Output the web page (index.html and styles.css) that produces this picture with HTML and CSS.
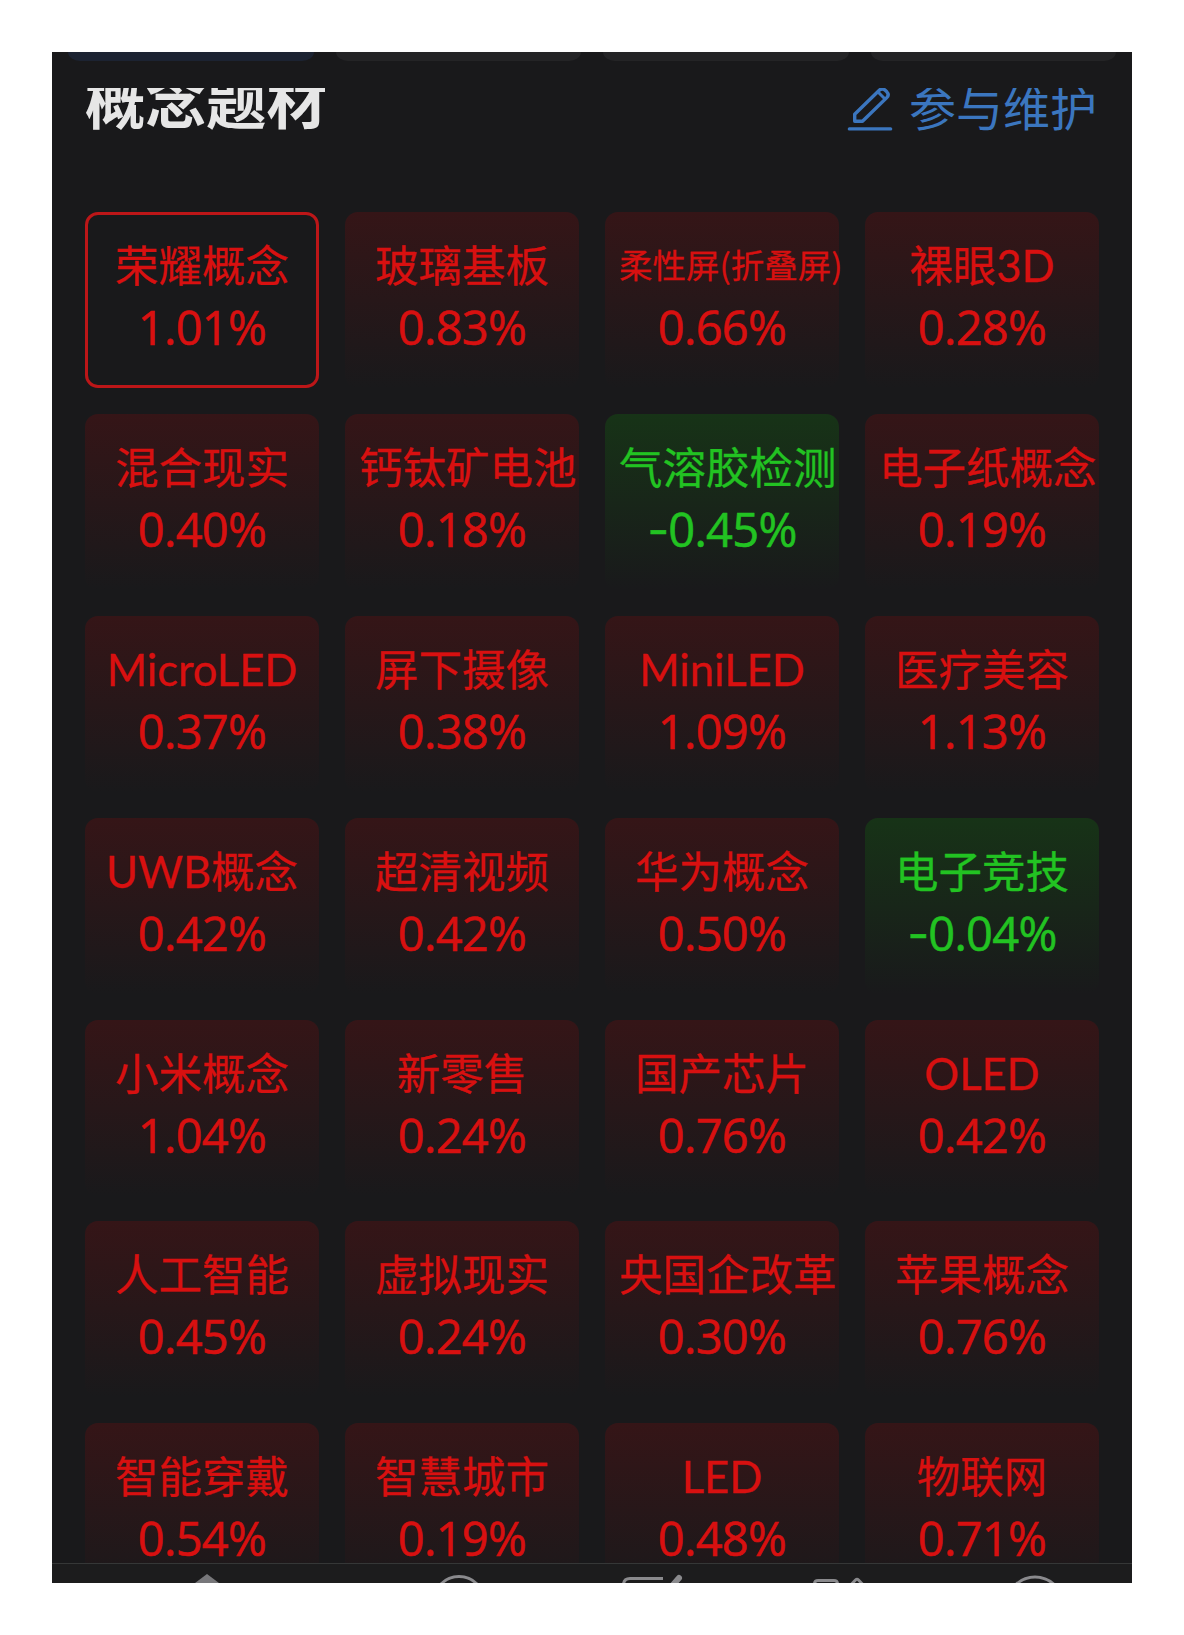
FILE: index.html
```html
<!DOCTYPE html>
<html lang="zh-CN">
<head>
    <meta charset="UTF-8">
    <meta name="viewport" content="width=device-width, initial-scale=1.0">
    <title>概念题材</title>
    <link rel="stylesheet" href="styles.css">
</head>
<body>
    <div id="app">
        <ul class="tabs">
            <li class="on"></li>
            <li></li>
            <li></li>
            <li></li>
        </ul>
        <div id="content">
            <div class="head">
                <h2>概念题材</h2>
                <a class="edit">
                    <svg width="46" height="44" viewBox="0 0 46 44" fill="none" stroke="#3b76bf" stroke-width="3.4">
                        <path d="M7.7 33.3V26.2L32.3 2.2Q35.2 -.5 38.2 2.2L39.8 3.8Q42.6 6.8 39.8 9.600L15.5 33.3Z" stroke-linejoin="round"/>
                        <path d="M31 4L38 11" stroke-width="3"/>
                        <path d="M2.4 40.9H43.6" stroke-linecap="round"/>
                    </svg>
                    <span>参与维护</span>
                </a>
            </div>
            <ul class="list" id="list"></ul>
        </div>
        <ul class="nav">
            <li><svg width="64" height="19" viewBox="0 0 64 19"><path d="M32 10L20 19H44Z" fill="#77777a"/></svg></li>
            <li><svg width="64" height="19" viewBox="0 0 64 19"><circle cx="32" cy="38" r="25.5"/></svg></li>
            <li><svg width="64" height="19" viewBox="0 0 64 19"><path d="M3.5 21Q3.5 14.5 10 14.5H43"/><path d="M52 22L59 14" stroke-width="6" stroke-linecap="round"/></svg></li>
            <li><svg width="64" height="19" viewBox="0 0 64 19"><path d="M3.5 24V20Q3.5 16.5 7 16.5H23Q26.5 16.5 26.5 20V24"/><path d="M36 25L44.5 16Q46 14.5 47.500 16L56 25"/></svg></li>
            <li><svg width="64" height="19" viewBox="0 0 64 19"><circle cx="32" cy="41" r="28"/></svg></li>
        </ul>
    </div>

    <script>
        var data = [
            ['荣耀概念', 1.01], ['玻璃基板', 0.83], ['柔性屏(折叠屏)', 0.66], ['裸眼3D', 0.28],
            ['混合现实', 0.40], ['钙钛矿电池', 0.18], ['气溶胶检测', -0.45], ['电子纸概念', 0.19],
            ['MicroLED', 0.37], ['屏下摄像', 0.38], ['MiniLED', 1.09], ['医疗美容', 1.13],
            ['UWB概念', 0.42], ['超清视频', 0.42], ['华为概念', 0.50], ['电子竞技', -0.04],
            ['小米概念', 1.04], ['新零售', 0.24], ['国产芯片', 0.76], ['OLED', 0.42],
            ['人工智能', 0.45], ['虚拟现实', 0.24], ['央国企改革', 0.30], ['苹果概念', 0.76],
            ['智能穿戴', 0.54], ['智慧城市', 0.19], ['LED', 0.48], ['物联网', 0.71]
        ];
        var html = '';
        for (var i = 0; i < data.length; i++) {
            var cls = data[i][1] < 0 ? 'down' : 'up';
            if (i == 0) { cls += ' active'; }
            // 带括号的名字太长，用小字号
            var small = data[i][0].indexOf('(') > -1 ? ' small' : '';
            html += '<li class="' + cls + '"><p class="name' + small + '">' + data[i][0] + '</p>'
                + '<p class="rate">' + data[i][1].toFixed(2).replace('-', '<i>-</i>') + '%</p></li>';
        }
        document.getElementById('list').innerHTML = html;
    </script>
</body>
</html>
```
FILE: styles.css
```css
* {
    margin: 0;
    padding: 0;
    box-sizing: border-box;
}
body {
    background: #fff;
    font-family: "Noto Sans CJK SC", sans-serif;
}
li {
    list-style: none;
}
#app {
    display: flex;
    flex-direction: column;
    width: 1080px;
    height: 1531px;
    margin: 52px;
    background: #19191b;
    overflow: hidden;
}
.tabs {
    display: flex;
    gap: 22px;
    height: 36px;
    padding: 0 16px;
}
.tabs li {
    flex: 1;
    height: 9px;
    border-radius: 0 0 12px 12px / 0 0 9px 9px;
    background: #242426;
}
.tabs li.on {
    background: #1c2332;
}
#content {
    height: 1475px;
    overflow: hidden;
}
.head {
    display: flex;
    justify-content: space-between;
    height: 124px;
    padding: 0 35px 0 33px;
}
.head h2 {
    margin-top: -26px;
    line-height: 72px;
    font-size: 60.500px;
    font-weight: 700;
    color: #e6e6e6;
}
.head .edit {
    display: flex;
    gap: 16px;
    color: #3b76bf;
    font-size: 47px;
}
.head .edit span {
    margin-top: -16px;
    line-height: 68px;
}
.list {
    display: grid;
    grid-template-columns: repeat(4, 234px);
    gap: 25.9px 26px;
    padding: 0 33px;
}
.list li {
    height: 176px;
    padding: 30px 14px 0;
    border-radius: 13px;
    text-align: center;
    white-space: nowrap;
}
.list .up {
    color: #d81010;
    background: linear-gradient(#351517, #19191b);
}
.list .down {
    color: #22c322;
    background: linear-gradient(#173317, #19191b);
}
.list .active {
    padding: 27px 11px 0;
    border: 3px solid #bc1618;
    background: none;
}
.list .name {
    height: 46px;
    line-height: 46px;
    font-family: Lato, "Noto Sans CJK SC", sans-serif;
    font-size: 43.500px;
    -webkit-text-stroke: .3px currentColor;
}
.list .small {
    line-height: 44px;
    font-family: "Noto Sans CJK SC", sans-serif;
    font-size: 33.500px;
}
.list .rate {
    margin-top: 9px;
    line-height: 60px;
    font-family: "Open Sans", sans-serif;
    font-size: 47px;
    letter-spacing: -.7px;
    -webkit-text-stroke: .6px currentColor;
}
.list .rate i {
    font-style: normal;
    font-family: Inter, sans-serif;
}
.nav {
    display: grid;
    grid-template-columns: 252px 193px 191px 192px 64px;
    height: 20px;
    padding-left: 123px;
    border-top: 1px solid #353737;
    background: #1c1c1d;
}
.nav svg {
    display: block;
    fill: none;
    stroke: #8a8a8d;
    stroke-width: 3;
}
.nav li:first-child svg {
    stroke: none;
}
```
